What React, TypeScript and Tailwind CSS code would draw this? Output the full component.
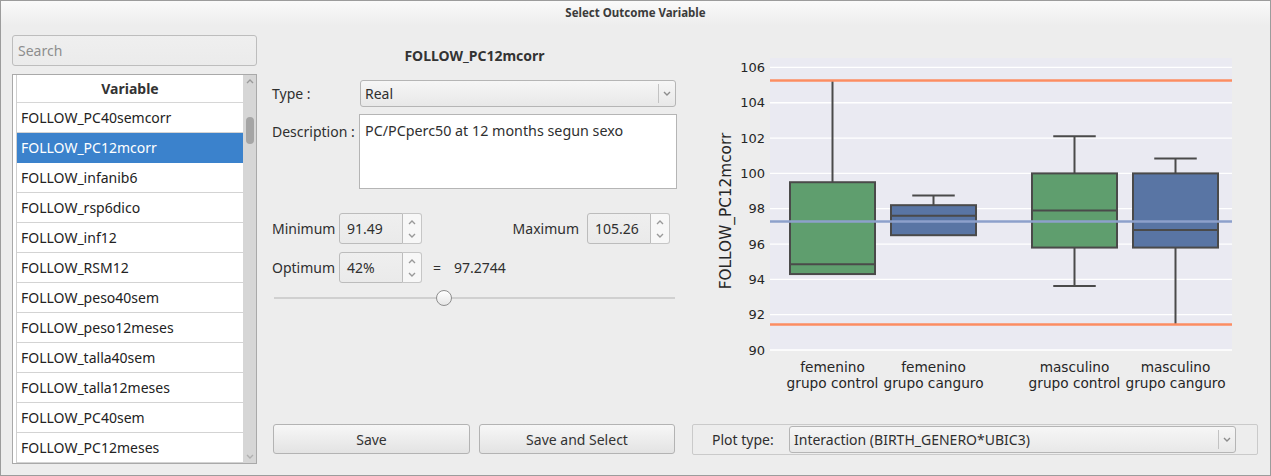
import React from "react";

const rows = [
  "FOLLOW_PC40semcorr",
  "FOLLOW_PC12mcorr",
  "FOLLOW_infanib6",
  "FOLLOW_rsp6dico",
  "FOLLOW_inf12",
  "FOLLOW_RSM12",
  "FOLLOW_peso40sem",
  "FOLLOW_peso12meses",
  "FOLLOW_talla40sem",
  "FOLLOW_talla12meses",
  "FOLLOW_PC40sem",
  "FOLLOW_PC12meses",
];

function Chevron({ up = false, color = "#8c8c8c" }: { up?: boolean; color?: string }) {
  return (
    <svg width="8" height="5" viewBox="0 0 8 5" className="block">
      <path
        d={up ? "M1 4 L4 1 L7 4" : "M1 1 L4 4 L7 1"}
        fill="none"
        stroke={color}
        strokeWidth="1.4"
      />
    </svg>
  );
}

function Combo({ value, width }: { value: string; width: string }) {
  return (
    <div
      className={`${width} h-[27px] rounded-[3px] border border-[#b5b5b5] bg-linear-to-b from-[#f6f6f6] to-[#e8e8e8] flex items-center text-[14px] text-[#2f2f2f]`}
    >
      <span className="pl-[4px] flex-1">{value}</span>
      <div className="h-[19px] w-px bg-[#c2c2c2]" />
      <div className="w-[16px] flex justify-center">
        <Chevron />
      </div>
    </div>
  );
}

function Spin({ value }: { value: string }) {
  return (
    <div className="flex h-[31px]">
      <div className="w-[64px] h-full rounded-l-[3px] border border-[#bcbcbc] bg-linear-to-b from-[#efefef] to-[#eaeaea] flex items-center pl-[7px] text-[14px] text-[#2f2f2f]">
        {value}
      </div>
      <div className="w-[19px] h-full rounded-r-[3px] border border-l-0 border-[#c6c6c6] bg-[#f7f7f7] flex flex-col items-center justify-center gap-[8px]">
        <Chevron up color="#999" />
        <Chevron color="#999" />
      </div>
    </div>
  );
}

function Button({ label, width }: { label: string; width: string }) {
  return (
    <div
      className={`${width} h-[30px] rounded-[3px] border border-[#b3b3b3] bg-linear-to-b from-[#f7f7f7] to-[#e3e3e3] flex items-center justify-center text-[14px] text-[#333]`}
    >
      {label}
    </div>
  );
}

const Y = (v: number) => 350 - (v - 90) * 17.66;

type BoxSpec = {
  x0: number;
  x1: number;
  q1: number;
  q3: number;
  med: number;
  lo: number;
  hi: number;
  fill: string;
  hiCap: boolean;
  loCap: boolean;
};

const boxes: BoxSpec[] = [
  { x0: 790, x1: 875, q1: 94.3, q3: 99.5, med: 94.85, lo: 94.3, hi: 105.26, fill: "#5f9e6e", hiCap: false, loCap: false },
  { x0: 891, x1: 976, q1: 96.5, q3: 98.2, med: 97.6, lo: 96.5, hi: 98.75, fill: "#5975a4", hiCap: true, loCap: false },
  { x0: 1032, x1: 1117, q1: 95.8, q3: 100, med: 97.9, lo: 93.62, hi: 102.1, fill: "#5f9e6e", hiCap: true, loCap: true },
  { x0: 1133, x1: 1218, q1: 95.8, q3: 100, med: 96.8, lo: 91.44, hi: 100.85, fill: "#5975a4", hiCap: true, loCap: false },
];

const xLabels = [
  { x: 832.5, a: "femenino", b: "grupo control" },
  { x: 933.5, a: "femenino", b: "grupo canguro" },
  { x: 1074.5, a: "masculino", b: "grupo control" },
  { x: 1175.5, a: "masculino", b: "grupo canguro" },
];

function Chart() {
  const ticks = [90, 92, 94, 96, 98, 100, 102, 104, 106];
  const font = "'DejaVu Sans', sans-serif";
  return (
    <svg width="566" height="375" viewBox="692 35 566 375" className="block">
      <rect x="770" y="58" width="462" height="292" fill="#eaeaf2" />
      {ticks.map((t) => (
        <g key={t}>
          <line x1="770" x2="1232" y1={Y(t)} y2={Y(t)} stroke="#ffffff" strokeWidth="1.3" />
          <text
            x="765"
            y={Y(t) + 4.7}
            textAnchor="end"
            fontFamily={font}
            fontSize="13"
            fill="#262626"
          >
            {t}
          </text>
        </g>
      ))}
      <text
        transform="translate(731 211) rotate(-90)"
        textAnchor="middle"
        fontFamily={font}
        fontSize="15.3"
        fill="#262626"
      >
        FOLLOW_PC12mcorr
      </text>
      {boxes.map((b, i) => {
        const cx = (b.x0 + b.x1) / 2;
        const cap = (b.x1 - b.x0) / 4;
        return (
          <g key={i} stroke="#4a4a4a" strokeWidth="2">
            {b.hi > b.q3 && <line x1={cx} x2={cx} y1={Y(b.q3)} y2={Y(b.hi)} />}
            {b.hiCap && <line x1={cx - cap} x2={cx + cap} y1={Y(b.hi)} y2={Y(b.hi)} />}
            {b.lo < b.q1 && <line x1={cx} x2={cx} y1={Y(b.q1)} y2={Y(b.lo)} />}
            {b.loCap && <line x1={cx - cap} x2={cx + cap} y1={Y(b.lo)} y2={Y(b.lo)} />}
            <rect
              x={b.x0}
              y={Y(b.q3)}
              width={b.x1 - b.x0}
              height={Y(b.q1) - Y(b.q3)}
              fill={b.fill}
            />
            <line x1={b.x0} x2={b.x1} y1={Y(b.med)} y2={Y(b.med)} />
          </g>
        );
      })}
      <line x1="770" x2="1232" y1={Y(105.26)} y2={Y(105.26)} stroke="#fc8d62" strokeWidth="2.6" />
      <line x1="770" x2="1232" y1={Y(91.44)} y2={Y(91.44)} stroke="#fc8d62" strokeWidth="2.6" />
      <line x1="770" x2="1232" y1={Y(97.2744)} y2={Y(97.2744)} stroke="#8da0cb" strokeWidth="2.6" />
      {xLabels.map((l) => (
        <g key={l.x + l.b}>
          <text x={l.x} y="371.5" textAnchor="middle" fontFamily={font} fontSize="13.7" fill="#262626">
            {l.a}
          </text>
          <text x={l.x} y="388" textAnchor="middle" fontFamily={font} fontSize="13.7" fill="#262626">
            {l.b}
          </text>
        </g>
      ))}
    </svg>
  );
}

export default function App() {
  return (
    <div className="w-[1271px] h-[476px] border border-[#9c9c9c] bg-[#ededed] flex flex-col font-['Noto_Sans','Open_Sans',sans-serif] overflow-hidden">
      {/* Title bar */}
      <div className="h-[24px] shrink-0 bg-linear-to-b from-[#fafafa] to-[#ededed] flex items-center justify-center text-[11.5px] font-bold text-[#3b3b3b]">
        Select Outcome Variable
      </div>

      <div className="flex pl-[11px] pt-[10px]">
        {/* Left: variable list */}
        <div className="w-[245px] flex flex-col">
          <div className="h-[31px] rounded-[3px] border border-[#bdbdbd] bg-linear-to-b from-[#efefef] to-[#ebebeb] flex items-center pl-[5px] text-[14px] text-[#8e8e8e]">
            Search
          </div>
          <div className="mt-[8px] h-[390px] border border-[#a9a9a9] bg-white flex">
            <div className="flex-1 pl-[3px]">
              <div className="h-full border-l border-[#cfcfcf]">
                <div className="h-[28px] border-b border-[#d6d6d6] flex items-center justify-center font-bold text-[14px] text-[#333]">
                  Variable
                </div>
                {rows.map((r, i) => (
                  <div
                    key={r}
                    className={`h-[30px] border-b flex items-center pl-[4px] text-[14px] ${
                      i === 1
                        ? "bg-[#3b82cc] border-[#3b82cc] text-white"
                        : "border-[#d3d3d3] text-[#222]"
                    }`}
                  >
                    {r}
                  </div>
                ))}
              </div>
            </div>
            <div className="w-[13px] bg-[#d6d6d6] flex flex-col items-center">
              <div className="mt-[4px]">
                <Chevron up color="#9a9a9a" />
              </div>
              <div className="mt-[33px] w-[8px] h-[27px] rounded-full bg-[#a5a5a5]" />
              <div className="mt-auto mb-[4px]">
                <Chevron color="#b0b0b0" />
              </div>
            </div>
          </div>
        </div>

        {/* Middle: variable editor */}
        <div className="ml-[15px] w-[405px] flex flex-col text-[14px] text-[#2f2f2f]">
          <div className="mt-[11px] h-[18px] flex items-center justify-center font-bold text-[14px] text-[#333]">
            FOLLOW_PC12mcorr
          </div>
          <div className="mt-[16px] flex items-center">
            <div className="w-[88px]">Type :</div>
            <Combo value="Real" width="w-[316px]" />
          </div>
          <div className="mt-[7px] flex">
            <div className="w-[87px] pt-[7px]">Description :</div>
            <div className="w-[318px] h-[75px] border border-[#b5b5b5] bg-white pl-[5px] pt-[5px] text-[14.3px]">
              PC/PCperc50 at 12 months segun sexo
            </div>
          </div>
          <div className="mt-[24px] w-[398px] flex items-center">
            <div className="w-[67px]">Minimum</div>
            <Spin value="91.49" />
            <div className="ml-auto mr-[8px]">Maximum</div>
            <Spin value="105.26" />
          </div>
          <div className="mt-[8px] flex items-center">
            <div className="w-[67px]">Optimum</div>
            <Spin value="42%" />
            <div className="ml-[11px]">=</div>
            <div className="ml-[13px]">97.2744</div>
          </div>
          <div className="relative mt-[7px] ml-[2px] w-[401px] h-[16px]">
            <div className="absolute left-0 right-0 top-[7px] h-[2px] bg-[#d0d0d0]" />
            <div className="absolute left-[162px] top-0 w-[16px] h-[16px] rounded-full border border-[#8e8e8e] bg-linear-to-b from-white to-[#e6e6e6]" />
          </div>
          <div className="mt-[118px] ml-[1px] flex gap-[9px]">
            <Button label="Save" width="w-[197px]" />
            <Button label="Save and Select" width="w-[196px]" />
          </div>
        </div>

        {/* Right: plot */}
        <div className="ml-[15px] w-[566px] flex flex-col">
          <Chart />
          <div className="mt-[14px] h-[31px] rounded-[2px] border border-[#cacaca] flex items-center text-[14px] text-[#2f2f2f]">
            <div className="pl-[19px] w-[96px]">Plot type:</div>
            <Combo value="Interaction (BIRTH_GENERO*UBIC3)" width="w-[447px]" />
          </div>
        </div>
      </div>
    </div>
  );
}
